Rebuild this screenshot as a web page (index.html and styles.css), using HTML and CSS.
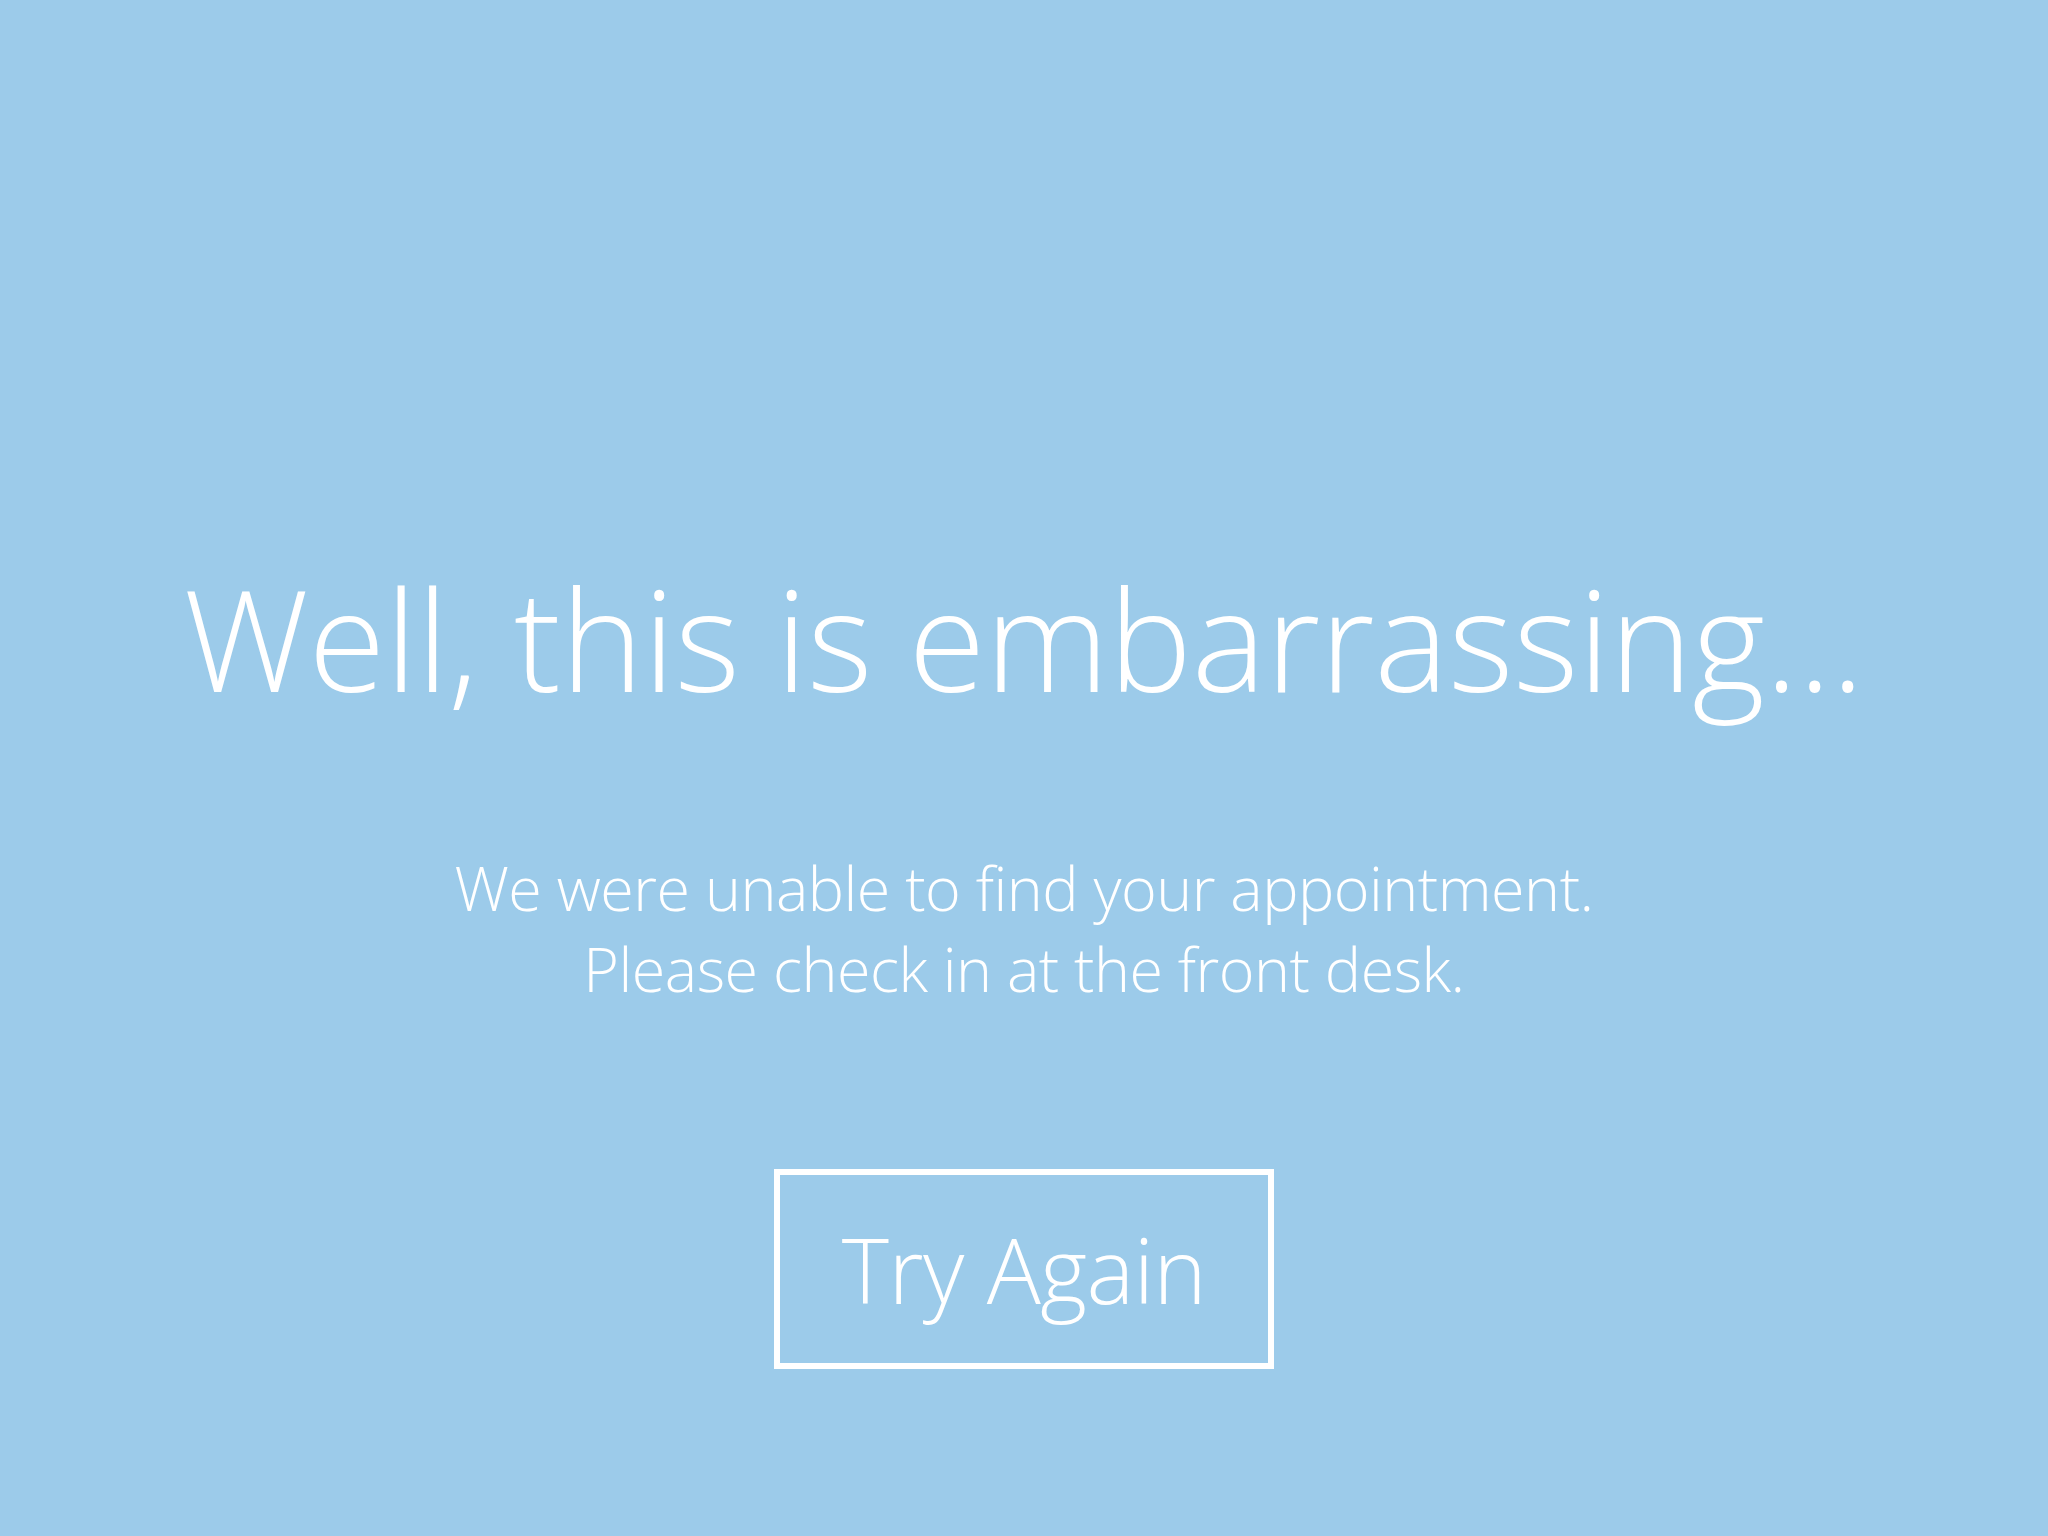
FILE: index.html
```html
<!DOCTYPE html>
<html lang="en">
<head>
<meta charset="utf-8">
<title>Appointment not found</title>
<link rel="stylesheet" href="styles.css">
</head>
<body>
<main class="page">
  <h1 class="title">Well, this is embarrassing...</h1>
  <p class="message">We were unable to find your appointment.<br>Please check in at the front desk.</p>
  <button class="retry" type="button">Try Again</button>
</main>
</body>
</html>
```

FILE: styles.css
```css
html, body {
  margin: 0;
  padding: 0;
  background: #9ccbea;
}

body {
  font-family: "Open Sans", "Liberation Sans", sans-serif;
  color: #ffffff;
  font-weight: 300;
}

.page {
  display: flex;
  flex-direction: column;
  align-items: center;
  padding-top: 554px;
  min-height: 100vh;
  box-sizing: border-box;
}

.title {
  margin: 0;
  font-size: 140px;
  line-height: 168px;
  font-weight: 300;
  letter-spacing: -0.2px;
  text-align: center;
}

.message {
  margin: 125px 0 0;
  font-size: 61px;
  line-height: 81px;
  font-weight: 300;
  letter-spacing: -0.5px;
  text-align: center;
}

.retry {
  margin-top: 160px;
  width: 500px;
  height: 200px;
  box-sizing: border-box;
  border: 6px solid #ffffff;
  background: transparent;
  color: #ffffff;
  font-family: "Open Sans", "Liberation Sans", sans-serif;
  font-weight: 300;
  font-size: 90px;
  line-height: 188px;
  letter-spacing: -0.5px;
  padding: 0;
}
```
